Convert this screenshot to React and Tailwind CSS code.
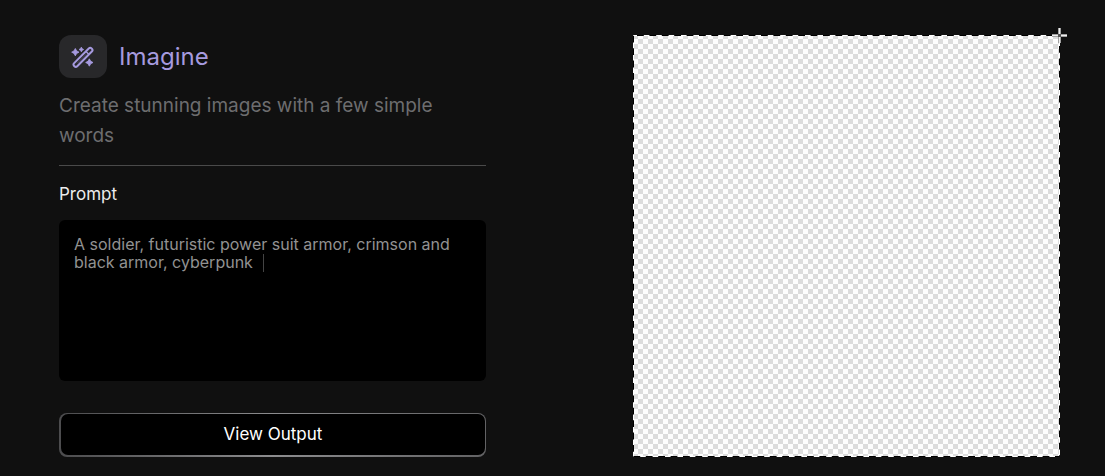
import { useState } from "react";

function WandIcon() {
  return (
    <svg viewBox="15 10.5 72 66" className="h-[22px] w-6" fill="none" aria-hidden="true">
      <g stroke="#a69adf" strokeWidth="6">
        <rect x="14" y="38" width="74" height="13" rx="6" transform="rotate(-45 51 44.5)" />
        <path d="M59 26l10 10" strokeWidth="4" />
        <path d="M34 62l27-27" strokeWidth="2" opacity=".5" />
      </g>
      <g fill="#a69adf" stroke="#a69adf" strokeWidth="2.5" strokeLinejoin="round">
        <path d="M28 18q2.500 9 11 11q-8.500 2-11 11q-2.500-9-11-11q8.500-2 11-11z" />
        <path d="M46 14q1.500 5.500 7 7q-5.500 1.500-7 7q-1.500-5.500-7-7q5.500-1.500 7-7z" />
        <path d="M70 49q2.500 9 11 11q-8.500 2-11 11q-2.500-9-11-11q8.500-2 11-11z" />
      </g>
    </svg>
  );
}

function Canvas() {
  return (
    <section
      aria-label="Output"
      className="relative min-h-[422px] bg-white bg-[conic-gradient(#dcdcdc_25%,#fdfdfd_0_50%,#dcdcdc_0_75%,#fdfdfd_0)] bg-[length:10px_10px] bg-[position:0px_4px]"
    >
      <svg className="absolute inset-0 h-full w-full" aria-hidden="true">
        <rect width="100%" height="100%" fill="none" stroke="#fff" strokeWidth="2" />
        <rect
          width="100%"
          height="100%"
          fill="none"
          stroke="#000"
          strokeWidth="2"
          strokeDasharray="6.8 5.6"
          strokeDashoffset="-4"
        />
      </svg>
      <svg viewBox="0 0 15 15" className="absolute -top-[7px] -right-[7px] size-[15px]" aria-hidden="true">
        <path d="M7.500 0v15M0 7.500h15" stroke="#555" strokeWidth="3" />
        <path d="M7.500 0v6M7.500 9v6M0 7.500h6M9 7.500h6" stroke="#eee" strokeWidth="2" />
      </svg>
    </section>
  );
}

export default function App() {
  const [prompt, setPrompt] = useState(
    "A soldier, futuristic power suit armor, crimson and black armor, cyberpunk "
  );
  return (
    <main className="grid min-h-screen grid-cols-2 items-start gap-[147px] bg-[#101010] pt-[35px] pr-[45px] pb-[19px] pl-[59px] font-['Inter',sans-serif]">
      <section className="flex flex-col">
        <header className="border-b border-[#4a4a4a] pb-[14px]">
          <div className="flex items-center gap-3">
            <div className="flex h-[43px] w-12 items-center justify-center rounded-xl bg-[#28282a]">
              <WandIcon />
            </div>
            <h1 className="text-2xl leading-8 text-[#a69adf]">Imagine</h1>
          </div>
          <p className="mt-[13px] text-[19px] leading-[30px] text-[#6d6d6f]">
            Create stunning images with a few simple words
          </p>
        </header>
        <label htmlFor="prompt" className="mt-4 text-[17px] leading-6 text-[#ececec]">
          Prompt
        </label>
        <div className="relative mt-[14px] flex">
          <textarea
            id="prompt"
            value={prompt}
            onChange={(e) => setPrompt(e.target.value)}
            className="h-[161px] w-full resize-none rounded-md bg-black p-[15px] text-base leading-[18px] text-[#929292] outline-none"
          />
          <span className="absolute top-[34px] left-[204px] h-[18px] w-px bg-[#444]" />
        </div>
        <button
          type="button"
          className="mt-8 h-11 rounded-lg bg-linear-to-r from-[#4c4c4e] via-[#8c8c8e] to-[#626264] pt-px pr-px pb-0.5 pl-0.5"
        >
          <span className="flex h-full items-center justify-center rounded-[7px] bg-black text-[17px] text-white">
            View Output
          </span>
        </button>
      </section>
      <Canvas />
    </main>
  );
}
